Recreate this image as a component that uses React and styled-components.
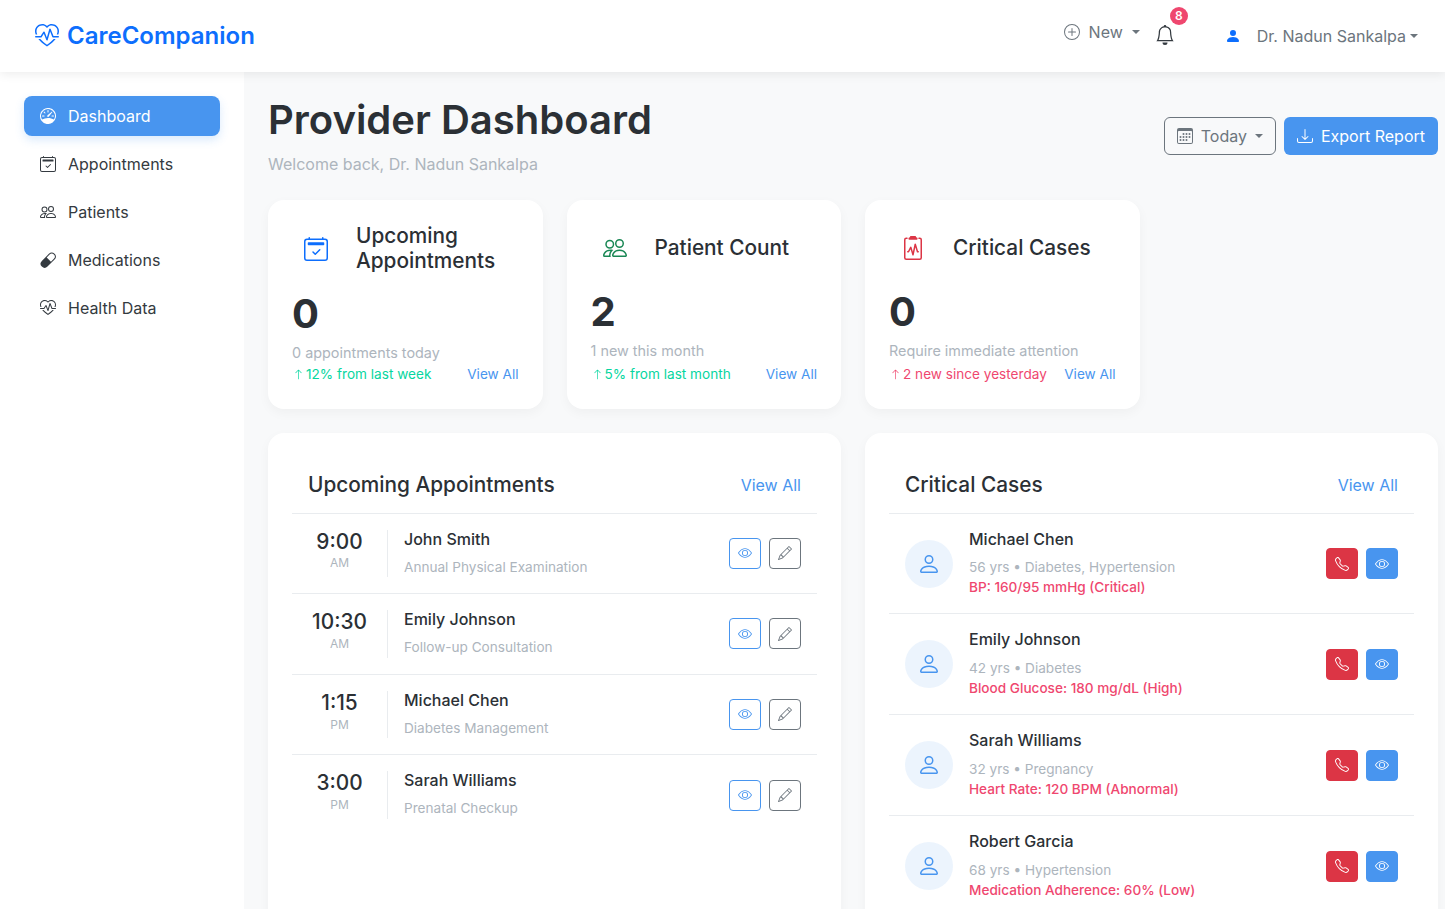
import React from "react";
import styled, { createGlobalStyle } from "styled-components";
import {
  BsHeartPulse, BsSpeedometer, BsCalendar2Check, BsPeople, BsCapsule, BsPlusCircle, BsBell,
  BsPersonFill, BsPerson, BsCalendar3, BsDownload, BsClipboard2Pulse, BsArrowUp, BsEye, BsPencil, BsTelephone,
} from "react-icons/bs";

const Global = createGlobalStyle`
  html, body { margin: 0; padding: 0; overflow: hidden; height: 100%; }
  body { font-family: Inter, "Liberation Sans", sans-serif; font-size: 16px; line-height: 1.5; color: #212529; background: #f8f9fa; }
  * { box-sizing: border-box; }
`;

const Navbar = styled.header`
  position: relative; z-index: 2;
  height: 72px; background: #fff; box-shadow: 0 2px 10px rgba(0,0,0,.08);
  display: flex; align-items: center; justify-content: space-between;
  padding: 0 27px 0 35px;
`;
const Brand = styled.div`
  display: flex; align-items: center; gap: 8px;
  color: #0d6efd; font-size: 24px; font-weight: 600; line-height: 1.5;
  svg { font-size: 24px; }
`;
const NavActions = styled.div`display: flex; align-items: center;`;
const Caret = styled.span`
  display: inline-block; width: 0; height: 0; margin-left: ${p => p.$gap || 8}px;
  border-top: 4.8px solid currentColor; border-left: 4.8px solid transparent; border-right: 4.8px solid transparent;
  vertical-align: 2px;
`;
const NewToggle = styled.div`
  display: flex; align-items: center; color: #6c757d; margin-bottom: 8px;
  svg { font-size: 16px; margin-right: 9px; }
`;
const BellWrap = styled.div`
  position: relative; margin-left: 15px; height: 22px; color: #343a40;
  svg { font-size: 20px; display: block; }
`;
const Badge = styled.span`
  position: absolute; top: -18px; left: 15px; width: 18px; height: 18px; border-radius: 50%;
  background: #ef476f; color: #fff; font-size: 12px; font-weight: 600; line-height: 18px; text-align: center;
`;
const UserToggle = styled.div`
  display: flex; align-items: center; color: #6c757d; margin-left: 50px;
  svg { font-size: 16px; color: #0d6efd; margin-right: 16px; }
`;
const Shell = styled.div`display: flex; height: calc(100vh - 72px);`;
const Sidebar = styled.nav`
  width: 244px; flex: none; background: #fff; padding: 24px;
  display: flex; flex-direction: column; gap: 8px;
`;
const NavItem = styled.div`
  height: 40px; display: flex; align-items: center; gap: 12px; padding: 0 16px; border-radius: 8px;
  color: ${p => p.$active ? "#fff" : "#343a40"};
  background: ${p => p.$active ? "#4895ef" : "transparent"};
  box-shadow: ${p => p.$active ? "0 4px 10px rgba(72,149,239,.2)" : "none"};
  svg { font-size: 16px; flex: none; }
`;
const Main = styled.main`flex: 1; min-width: 0; padding: 24px 7px 0 24px;`;
const PageHead = styled.div`display: flex; align-items: center; justify-content: space-between; margin-bottom: 24px;`;
const PageTitle = styled.h1`margin: 0 0 8px; font-size: 40px; font-weight: 600; line-height: 1.2; color: #2b3035;`;
const PageSub = styled.p`margin: 0; color: #adb5bd;`;
const HeadActions = styled.div`display: flex; gap: 8px;`;
const OutlineBtn = styled.div`
  height: 38px; display: flex; align-items: center; padding: 0 12px; border: 1px solid #6c757d; border-radius: 6px; color: #6c757d;
  svg { font-size: 16px; margin-right: 8px; }
`;
const PrimaryBtn = styled.div`
  height: 38px; display: flex; align-items: center; padding: 0 13px; border-radius: 6px; background: #4895ef; color: #fff;
  svg { font-size: 16px; margin-right: 8px; }
`;
const StatGrid = styled.section`display: grid; grid-template-columns: repeat(4, 1fr); gap: 24px; margin-bottom: 24px;`;
const Card = styled.div`background: #fff; border-radius: 16px; box-shadow: 0 4px 12px rgba(0,0,0,.04);`;
const StatCard = styled(Card)`padding: 24px; display: flex; flex-direction: column; min-height: 204px;`;
const StatHead = styled.div`display: flex; align-items: center; margin-bottom: 16px;`;
const StatIcon = styled.div`
  width: 48px; height: 48px; flex: none; margin-right: 16px; display: flex; align-items: center; justify-content: center;
  color: ${p => p.$color}; font-size: 24px;
`;
const StatTitle = styled.h3`margin: 0; font-size: 20.8px; font-weight: 500; line-height: 1.2; color: #2b3035;`;
const StatValue = styled.div`font-size: 40px; font-weight: 700; line-height: 1.2; color: #2b3035; margin-bottom: 4px;`;
const StatSub = styled.div`font-size: 14.4px; line-height: 1.5; color: #adb5bd;`;
const StatFoot = styled.div`margin-top: auto; display: flex; justify-content: space-between; align-items: center; font-size: 13.6px; line-height: 21px;`;
const Trend = styled.span`
  color: ${p => p.$color}; display: inline-flex; align-items: center; padding-left: 1px;
  svg { font-size: 11px; margin-right: 2px; }
`;
const LinkText = styled.span`color: #4895ef; font-size: ${p => p.$size || 16}px;`;
const Panels = styled.section`display: grid; grid-template-columns: 1fr 1fr; gap: 24px;`;
const Panel = styled(Card)`padding: 24px; min-height: 520px;`;
const PanelHead = styled.div`
  display: flex; justify-content: space-between; align-items: center; padding: 16px; border-bottom: 1px solid #e9ecef;
`;
const PanelTitle = styled.h5`margin: 0; font-size: 20.8px; font-weight: 500; line-height: 24px; color: #2b3035;`;
const Row = styled.div`
  display: flex; align-items: center; padding: ${p => p.$pad || "16px"}; border-bottom: 1px solid #e9ecef;
  &:last-child { border-bottom: ${p => p.$keep ? "1px solid #e9ecef" : "none"}; }
`;
const TimeCol = styled.div`
  width: 96px; flex: none; align-self: stretch; border-right: 1px solid #e9ecef; text-align: center; margin-right: 16px;
`;
const TimeValue = styled.div`font-size: 20.8px; font-weight: 500; line-height: 1.2; color: #2b3035;`;
const TimeSuffix = styled.div`font-size: 12px; line-height: 18px; color: #adb5bd;`;
const Info = styled.div`flex: 1; min-width: 0;`;
const Name = styled.h6`margin: 0 0 8px; font-size: 16px; font-weight: 500; line-height: 1.2; color: #2b3035;`;
const Sub = styled.div`font-size: 13.6px; line-height: 1.5; color: #adb5bd;`;
const Alert = styled.div`font-size: 13.6px; line-height: 1.5; font-weight: 500; color: #ef476f;`;
const Actions = styled.div`display: flex; gap: 8px; flex: none;`;
const IconBtn = styled.div`
  width: 32px; height: 31px; display: flex; align-items: center; justify-content: center; border-radius: 4px; font-size: 14px;
  border: 1px solid ${p => p.$color};
  background: ${p => p.$solid ? p.$color : "transparent"};
  color: ${p => p.$solid ? "#fff" : p.$color};
`;
const Avatar = styled.div`
  width: 48px; height: 48px; flex: none; border-radius: 50%; background: rgba(72,149,239,.1); color: #4895ef;
  display: flex; align-items: center; justify-content: center; font-size: 24px; margin-right: 16px;
`;

const navItems = [
  [BsSpeedometer, "Dashboard", true], [BsCalendar2Check, "Appointments"], [BsPeople, "Patients"],
  [BsCapsule, "Medications"], [BsHeartPulse, "Health Data"],
];
const stats = [
  { Icon: BsCalendar2Check, color: "#0d6efd", title: <>Upcoming<br />Appointments</>, value: 0, sub: "0 appointments today", trend: "12% from last week", tc: "#06d6a0" },
  { Icon: BsPeople, color: "#198754", title: "Patient Count", value: 2, sub: "1 new this month", trend: "5% from last month", tc: "#06d6a0" },
  { Icon: BsClipboard2Pulse, color: "#dc3545", title: "Critical Cases", value: 0, sub: "Require immediate attention", trend: "2 new since yesterday", tc: "#ef476f" },
];
const appts = [
  ["9:00", "AM", "John Smith", "Annual Physical Examination"],
  ["10:30", "AM", "Emily Johnson", "Follow-up Consultation"],
  ["1:15", "PM", "Michael Chen", "Diabetes Management"],
  ["3:00", "PM", "Sarah Williams", "Prenatal Checkup"],
];
const cases = [
  ["Michael Chen", "56 yrs • Diabetes, Hypertension", "BP: 160/95 mmHg (Critical)"],
  ["Emily Johnson", "42 yrs • Diabetes", "Blood Glucose: 180 mg/dL (High)"],
  ["Sarah Williams", "32 yrs • Pregnancy", "Heart Rate: 120 BPM (Abnormal)"],
  ["Robert Garcia", "68 yrs • Hypertension", "Medication Adherence: 60% (Low)"],
];

export default function App() {
  return (
    <>
      <Global />
      <Navbar>
        <Brand><BsHeartPulse />CareCompanion</Brand>
        <NavActions>
          <NewToggle><BsPlusCircle />New<Caret $gap={9} /></NewToggle>
          <BellWrap><BsBell /><Badge>8</Badge></BellWrap>
          <UserToggle><BsPersonFill />Dr. Nadun Sankalpa<Caret $gap={4} /></UserToggle>
        </NavActions>
      </Navbar>
      <Shell>
        <Sidebar>
          {navItems.map(([Icon, label, active]) => (
            <NavItem key={label} $active={active}><Icon />{label}</NavItem>
          ))}
        </Sidebar>
        <Main>
          <PageHead>
            <div>
              <PageTitle>Provider Dashboard</PageTitle>
              <PageSub>Welcome back, Dr. Nadun Sankalpa</PageSub>
            </div>
            <HeadActions>
              <OutlineBtn><BsCalendar3 />Today<Caret $gap={8} /></OutlineBtn>
              <PrimaryBtn><BsDownload />Export Report</PrimaryBtn>
            </HeadActions>
          </PageHead>
          <StatGrid>
            {stats.map(({ Icon, color, title, value, sub, trend, tc }, i) => (
              <StatCard key={i}>
                <StatHead>
                  <StatIcon $color={color}><Icon /></StatIcon>
                  <StatTitle>{title}</StatTitle>
                </StatHead>
                <StatValue>{value}</StatValue>
                <StatSub>{sub}</StatSub>
                <StatFoot>
                  <Trend $color={tc}><BsArrowUp />{trend}</Trend>
                  <LinkText $size={13.6}>View All</LinkText>
                </StatFoot>
              </StatCard>
            ))}
          </StatGrid>
          <Panels>
            <Panel>
              <PanelHead>
                <PanelTitle>Upcoming Appointments</PanelTitle>
                <LinkText>View All</LinkText>
              </PanelHead>
              {appts.map(([t, s, name, desc]) => (
                <Row key={t} $pad="16px 16px 16px 0">
                  <TimeCol>
                    <TimeValue>{t}</TimeValue>
                    <TimeSuffix>{s}</TimeSuffix>
                  </TimeCol>
                  <Info>
                    <Name>{name}</Name>
                    <Sub>{desc}</Sub>
                  </Info>
                  <Actions>
                    <IconBtn $color="#4895ef"><BsEye /></IconBtn>
                    <IconBtn $color="#6c757d"><BsPencil /></IconBtn>
                  </Actions>
                </Row>
              ))}
            </Panel>
            <Panel>
              <PanelHead>
                <PanelTitle>Critical Cases</PanelTitle>
                <LinkText>View All</LinkText>
              </PanelHead>
              {cases.map(([name, desc, alert]) => (
                <Row key={name} $keep>
                  <Avatar><BsPerson /></Avatar>
                  <Info>
                    <Name>{name}</Name>
                    <Sub>{desc}</Sub>
                    <Alert>{alert}</Alert>
                  </Info>
                  <Actions>
                    <IconBtn $solid $color="#dc3545"><BsTelephone /></IconBtn>
                    <IconBtn $solid $color="#4895ef"><BsEye /></IconBtn>
                  </Actions>
                </Row>
              ))}
            </Panel>
          </Panels>
        </Main>
      </Shell>
    </>
  );
}
